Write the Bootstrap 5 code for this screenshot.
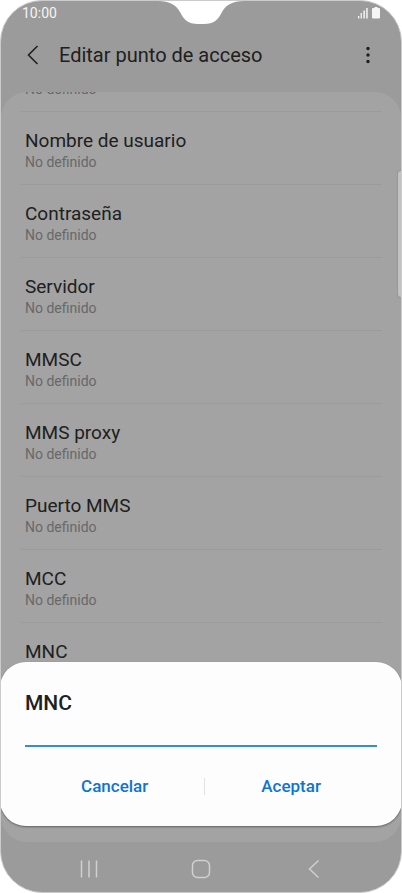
<!DOCTYPE html>
<html lang="es">
<head>
<meta charset="utf-8">
<meta name="viewport" content="width=device-width, initial-scale=1">
<title>Editar punto de acceso</title>
<link href="https://cdn.jsdelivr.net/npm/bootstrap@5.3.0/dist/css/bootstrap.min.css" rel="stylesheet">
<style>
body { font-family: Roboto, "Liberation Sans", sans-serif; background: #fff; color: #202020; }
.phone { min-height: 100vh; background: #9b9b9b; border: 1px solid #cbcbcb; border-radius: 42px; }
.notch { top: -1px; left: 50%; transform: translateX(-50%); }
.status { height: 24px; font-size: 14px; line-height: 24px; color: #f5f5f5; padding: 0 20px 0 21px; }
.topbar { height: 67px; padding: 0 23px 8px 22px; }
.topbar h1 { font-size: 20px; line-height: 24px; }
.plain-btn { background: none; border: 0; padding: 0; line-height: 0; color: inherit; }
.panel { background: #a3a3a3; border-radius: 26px; }
.setting { height: 73px; margin: 0 19px 0 20px; padding: 0 4px 12px; border-bottom: 1px solid #9b9b9b; }
.setting.cut { height: 20px; }
.setting-name { font-size: 19px; line-height: 24px; }
.setting-value { font-size: 14px; line-height: 19px; color: #686868; }
.rest { height: 146px; }
.thumb { top: 170px; right: 0; width: 3px; height: 126px; background: #c2c2c2; border-radius: 4px 0 0 4px; box-shadow: 0 0 1px 1px #979797; }
.sheet { left: -1px; right: -1px; bottom: 66px; background: #fdfdfd; border-radius: 26px; padding: 28px 25px 24px; box-shadow: 0 1px 2px rgba(0,0,0,.4); }
.sheet label { font-size: 21px; line-height: 26px; font-weight: 500; }
.sheet input { height: 31px; border: 0; border-bottom: 2px solid #3290d2; border-radius: 0; background: none; padding: 0; outline: 0; font-size: 18px; }
.sheet .action { font-size: 17px; line-height: 24px; font-weight: 500; color: #0d74d2; padding: 0; border: 0; }
.split { width: 1px; height: 17px; background: #e2e2e2; }
.actions { margin-top: 27px; }
.navkeys { height: 50px; color: #d0d0d0; padding: 3px 31px 0 32px; }
</style>
<script src="https://cdn.jsdelivr.net/npm/bootstrap@5.3.0/dist/js/bootstrap.bundle.min.js"></script>
</head>
<body>
<div class="phone position-relative overflow-hidden d-flex flex-column">
  <svg class="notch position-absolute" width="90" height="25" viewBox="0 0 90 25" aria-hidden="true"><path d="M0 0H90V1H88C76 1 70 5 66 12C62 20 58 24 48 24H42C32 24 28 20 24 12C20 5 14 1 2 1H0Z" fill="#fff"/></svg>
  <div class="status d-flex justify-content-between align-items-center">
    <span>10:00</span>
    <svg width="24" height="12" viewBox="0 0 24 12" fill="#f5f5f5" aria-hidden="true"><rect x="1" y="9" width="1.3" height="2.5"/><rect x="3.6" y="6" width="1.3" height="5.5"/><rect x="6.4" y="3.5" width="1.5" height="8"/><rect x="9.2" y="1" width="1.5" height="10.5"/><path d="M17.500 0h3v1h1.500q1 0 1 1v8.500q0 1-1 1h-6q-1 0-1-1v-8.500q0-1 1-1h1.500Z"/></svg>
  </div>
  <header class="topbar d-flex align-items-center">
    <button class="plain-btn" aria-label="Atrás"><svg width="20" height="22" viewBox="0 0 20 22" fill="none" stroke="currentColor" stroke-width="1.6"><path d="M14.500 2L5.500 11L14.500 20"/></svg></button>
    <h1 class="fw-normal mb-0 ms-3 flex-fill">Editar punto de acceso</h1>
    <button class="plain-btn" aria-label="Más opciones"><svg width="20" height="20" viewBox="0 0 20 20" fill="currentColor"><circle cx="10" cy="3.5" r="1.7"/><circle cx="10" cy="10" r="1.7"/><circle cx="10" cy="16.5" r="1.7"/></svg></button>
  </header>
  <main class="panel flex-fill overflow-hidden">
    <div class="setting cut d-flex flex-column justify-content-end"><div class="setting-value">No definido</div></div>
    <div class="setting d-flex flex-column justify-content-end"><div class="setting-name">Nombre de usuario</div><div class="setting-value">No definido</div></div>
    <div class="setting d-flex flex-column justify-content-end"><div class="setting-name">Contraseña</div><div class="setting-value">No definido</div></div>
    <div class="setting d-flex flex-column justify-content-end"><div class="setting-name">Servidor</div><div class="setting-value">No definido</div></div>
    <div class="setting d-flex flex-column justify-content-end"><div class="setting-name">MMSC</div><div class="setting-value">No definido</div></div>
    <div class="setting d-flex flex-column justify-content-end"><div class="setting-name">MMS proxy</div><div class="setting-value">No definido</div></div>
    <div class="setting d-flex flex-column justify-content-end"><div class="setting-name">Puerto MMS</div><div class="setting-value">No definido</div></div>
    <div class="setting d-flex flex-column justify-content-end"><div class="setting-name">MCC</div><div class="setting-value">No definido</div></div>
    <div class="setting d-flex flex-column justify-content-end"><div class="setting-name">MNC</div><div class="setting-value">&nbsp;</div></div>
    <div class="rest"></div>
  </main>
  <div class="thumb position-absolute"></div>
  <nav class="navkeys d-flex justify-content-around align-items-center">
    <button class="plain-btn" aria-label="Recientes"><svg width="20" height="20" viewBox="0 0 20 20" stroke="currentColor" stroke-width="1.5"><path d="M2.500 1.500V18.500M10 1.500V18.500M17.500 1.500V18.500"/></svg></button>
    <button class="plain-btn" aria-label="Inicio"><svg width="20" height="20" viewBox="0 0 20 20" fill="none" stroke="currentColor" stroke-width="1.5"><rect x="1.5" y="1.5" width="17" height="17" rx="5"/></svg></button>
    <button class="plain-btn" aria-label="Volver"><svg width="20" height="20" viewBox="0 0 20 20" fill="none" stroke="currentColor" stroke-width="1.5"><path d="M14.500 1.500L5.500 10L14.500 18.500"/></svg></button>
  </nav>
  <form class="sheet position-absolute" role="dialog" aria-labelledby="mnc-label">
    <label id="mnc-label" for="mnc" class="d-block">MNC</label>
    <input id="mnc" type="text" class="w-100 d-block">
    <div class="actions d-flex align-items-center pb-1">
      <button type="button" class="btn action flex-fill">Cancelar</button>
      <span class="split flex-shrink-0"></span>
      <button type="button" class="btn action flex-fill">Aceptar</button>
    </div>
  </form>
</div>
</body>
</html>
